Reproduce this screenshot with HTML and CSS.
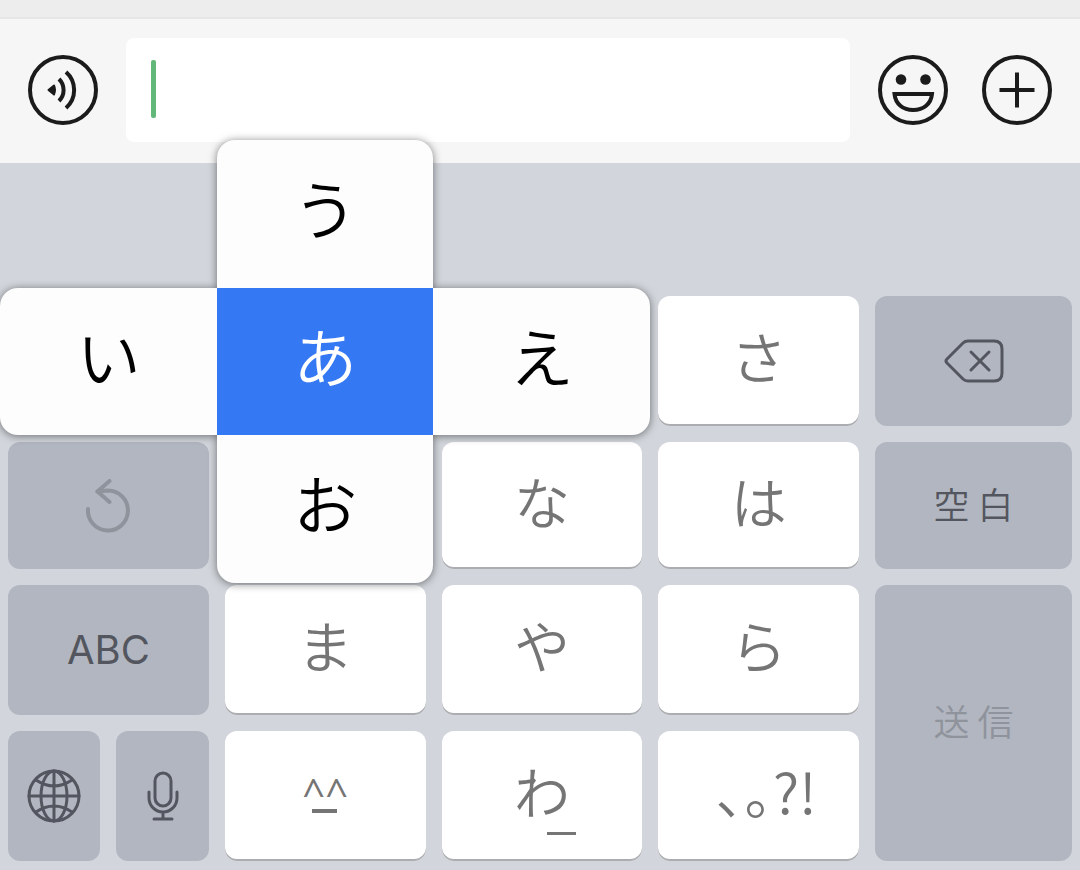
FILE: index.html
```html
<!DOCTYPE html>
<html lang="ja">
<head>
    <meta charset="UTF-8">
    <meta name="viewport" content="width=device-width, initial-scale=1.0">
    <title>Kana Keyboard</title>
    <link rel="stylesheet" href="styles.css">
</head>
<body>
    <header class="chat-bar">
        <button type="button" class="round-button" aria-label="Voice">
            <svg width="70" height="70" viewBox="0 0 70 70">
                <circle cx="35" cy="35" r="33"/>
                <path class="solid" d="M20.500 35 L26 30.500 Q28 35 26 39.500 Z"/>
                <path d="M31 24 A15.500 15.500 0 0 1 31 46"/>
                <path d="M38 17 A24 24 0 0 1 38 53"/>
            </svg>
        </button>
        <div class="message">
            <input type="text" class="message-input" aria-label="Message">
            <span class="caret"></span>
        </div>
        <div class="actions">
            <button type="button" class="round-button" aria-label="Emoji">
                <svg width="70" height="70" viewBox="0 0 70 70">
                    <circle cx="35" cy="35" r="33"/>
                    <circle class="dot" cx="23" cy="24.500" r="5.300"/>
                    <circle class="dot" cx="47.500" cy="24.500" r="5.300"/>
                    <path d="M16.500 39 H54 C53 49 45.500 55 35.200 55 S17.500 49 16.500 39 Z"/>
                </svg>
            </button>
            <button type="button" class="round-button" aria-label="More">
                <svg width="70" height="70" viewBox="0 0 70 70">
                    <circle cx="35" cy="35" r="33"/>
                    <path d="M35 17.500 V52.500 M17.500 35 H52.500"/>
                </svg>
            </button>
        </div>
    </header>

    <main class="keyboard">
        <div class="key-slot slot-a">
            <div class="flick">
                <button type="button" class="flick-key up">う</button>
                <button type="button" class="flick-key left">い</button>
                <button type="button" class="flick-key center">あ</button>
                <button type="button" class="flick-key right">え</button>
                <button type="button" class="flick-key down">お</button>
            </div>
        </div>
        <button type="button" class="key col-4">さ</button>
        <button type="button" class="key gray" aria-label="Delete">
            <svg width="60" height="44" viewBox="0 0 60 44">
                <path d="M24 2 H50 Q58 2 58 10 V34 Q58 42 50 42 H24 Q21 42 19 40 L3 24 Q1 22 3 20 L19 4 Q21 2 24 2 Z"/>
                <path d="M27 13 L45 31 M45 13 L27 31"/>
            </svg>
        </button>

        <button type="button" class="key gray faded" aria-label="Undo">
            <svg width="46" height="54" viewBox="0 0 46 54">
                <path d="M3 30 A20 20 0 1 0 23 11.500 L12.500 12.500"/>
                <path d="M24.500 2 L12.500 12.500 L24.500 23"/>
            </svg>
        </button>
        <button type="button" class="key col-3">な</button>
        <button type="button" class="key">は</button>
        <button type="button" class="key gray word">空 白</button>

        <button type="button" class="key gray latin">ABC</button>
        <button type="button" class="key">ま</button>
        <button type="button" class="key">や</button>
        <button type="button" class="key">ら</button>
        <button type="button" class="key gray word faded send">送 信</button>

        <div class="key-pair">
            <button type="button" class="key gray" aria-label="Switch keyboard">
                <svg width="54" height="54" viewBox="0 0 54 54">
                    <circle cx="27" cy="27" r="25"/>
                    <ellipse cx="27" cy="27" rx="13" ry="25"/>
                    <path d="M27 2 V52 M2 27 H52 M9 11 Q27 23 45 11 M9 43 Q27 31 45 43"/>
                </svg>
            </button>
            <button type="button" class="key gray" aria-label="Dictation">
                <svg width="32" height="50" viewBox="0 0 32 50">
                    <rect x="8" y="2" width="16" height="33" rx="8"/>
                    <path d="M2 21 V27 A14 14 0 0 0 30 27 V21 M16 41 V48 M7 48 H25"/>
                </svg>
            </button>
        </div>
        <button type="button" class="key face">^^</button>
        <button type="button" class="key wa">わ</button>
        <button type="button" class="key marks">､｡?!</button>
    </main>
</body>
</html>
```
FILE: styles.css
```css
* {
    box-sizing: border-box;
}

body {
    margin: 0;
    min-height: 100vh;
    display: flex;
    flex-direction: column;
    background-color: #d2d6dc;
    font-family: "Noto Sans CJK JP", sans-serif;
}

button {
    margin: 0;
    padding: 0;
    border: none;
    background: none;
    font-family: inherit;
    cursor: pointer;
}

svg {
    display: block;
    fill: none;
    stroke: currentColor;
}

/* Message bar */
.chat-bar {
    display: flex;
    align-items: center;
    gap: 28px;
    padding: 21px 28px;
    border-top: 17px solid #ededed;
    background-color: #f6f6f6;
    box-shadow: inset 0 2px 0 #e6e6e6;
}

.round-button {
    color: #1b1b1b;
}

.round-button svg {
    stroke-width: 4;
}

.round-button .solid {
    fill: currentColor;
    stroke-width: 2;
    stroke-linejoin: round;
}

.round-button .dot {
    fill: currentColor;
    stroke: none;
}

.message {
    position: relative;
    flex: 1;
}

.message-input {
    display: block;
    width: 100%;
    height: 104px;
    padding: 0 28px;
    border: none;
    border-radius: 8px;
    outline: none;
    background-color: #fff;
    font-family: inherit;
    font-size: 44px;
    caret-color: transparent;
}

.caret {
    position: absolute;
    left: 25px;
    top: 22px;
    width: 5px;
    height: 58px;
    border-radius: 2px;
    background-color: #62b878;
}

.actions {
    display: flex;
    gap: 34px;
}

/* Keys */
.keyboard {
    flex: 1;
    display: grid;
    grid-template-columns: repeat(4, 201fr) 197fr;
    grid-template-rows: 130px 127px 130px 130px;
    gap: 16px;
    padding: 133px 8px 9px;
}

.key {
    position: relative;
    display: flex;
    align-items: center;
    justify-content: center;
    min-width: 0;
    padding-bottom: 12px;
    border-radius: 12px;
    background-color: #fff;
    box-shadow: inset 0 -2px 0 #abadb1;
    color: #757575;
    font-size: 56px;
    font-weight: 350;
    line-height: 1;
}

.key.gray {
    padding-bottom: 0;
    background-color: #b2b6c0;
    box-shadow: none;
    color: #53565e;
}

.key.gray svg {
    stroke-width: 3;
    stroke-linejoin: round;
    stroke-linecap: round;
}

.key.gray.faded {
    color: #8f939c;
}

.key.gray.faded svg {
    stroke-width: 4;
}

.key.word {
    padding-bottom: 6px;
    font-size: 36px;
}

.key.latin {
    font-family: Inter, sans-serif;
    font-size: 40px;
    font-weight: 400;
}

.col-3 {
    grid-column: 3;
}

.col-4 {
    grid-column: 4;
}

.send {
    grid-column: 5;
    grid-row: 3 / 5;
}

.key-pair {
    display: grid;
    grid-template-columns: 1fr 1fr;
    gap: 16px;
}

.key.face {
    padding-bottom: 6px;
    font-family: "Open Sans", sans-serif;
    font-size: 40px;
    font-weight: 400;
}

.face::after {
    content: "";
    position: absolute;
    left: calc(50% - 13px);
    top: 78px;
    width: 25px;
    height: 4px;
    background-color: currentColor;
}

.wa::after {
    content: "";
    position: absolute;
    left: calc(50% + 5px);
    top: 101px;
    width: 29px;
    height: 3px;
    background-color: currentColor;
}

.marks {
    padding-left: 16px;
}

/* Flick popup, centred over its key */
.key-slot {
    position: relative;
}

.slot-a {
    grid-column: 2;
    z-index: 1;
}

.flick {
    position: absolute;
    left: calc(50% - 325px);
    top: -156px;
    display: grid;
    grid-template-columns: 217px 216px 217px;
    grid-template-rows: 148px 147px 148px;
    filter: drop-shadow(0 1px 4px rgba(0, 0, 0, 0.5));
}

.flick-key {
    padding-bottom: 16px;
    background-color: #fdfdfd;
    color: #000;
    font-size: 64px;
    font-weight: 350;
    line-height: 1;
}

.up {
    grid-area: 1 / 2;
    border-radius: 18px 18px 0 0;
}

.left {
    grid-area: 2 / 1;
    border-radius: 18px 0 0 18px;
}

.center {
    grid-area: 2 / 2;
    background-color: #3478f3;
    color: #fff;
}

.right {
    grid-area: 2 / 3;
    border-radius: 0 18px 18px 0;
}

.down {
    grid-area: 3 / 2;
    border-radius: 0 0 18px 18px;
}
```
